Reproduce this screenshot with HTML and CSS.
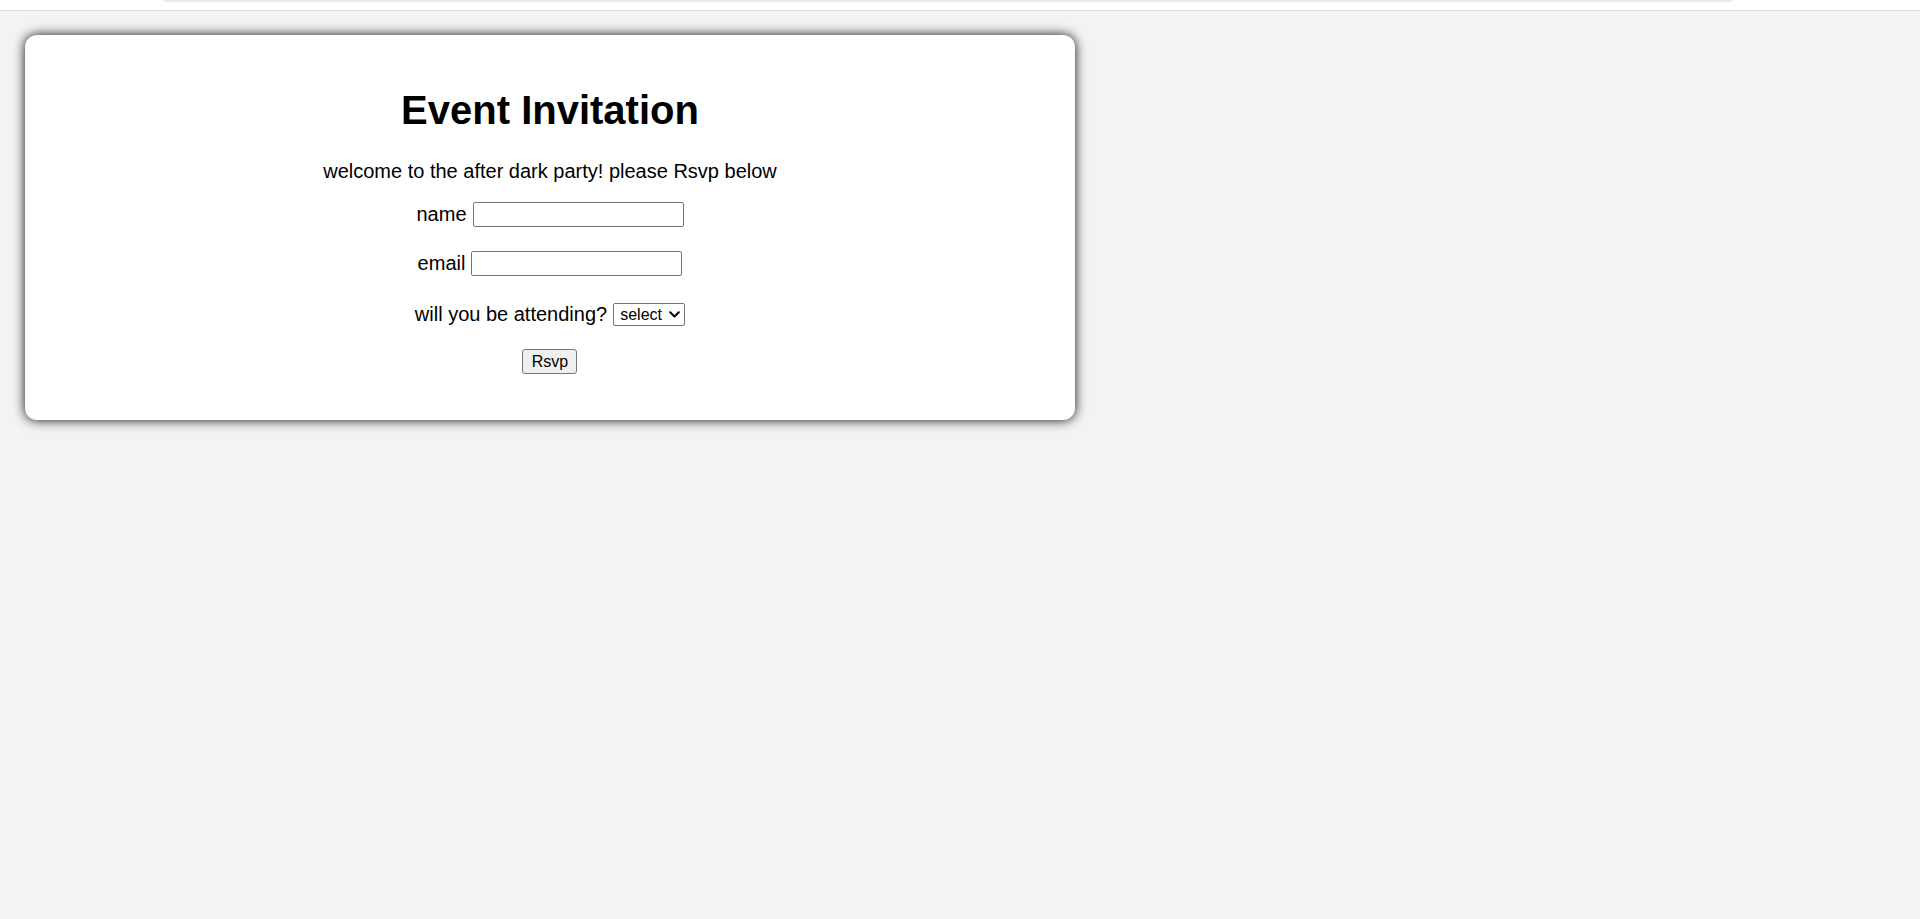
FILE: index.html
```html
<!DOCTYPE html>
<html lang="en">
<head>
<meta charset="utf-8">
<title>Event Invitation</title>
<link rel="stylesheet" href="styles.css">
</head>
<body>
<div class="topstrip"><div class="topbar"></div></div>
<main class="page">
  <section class="card">
    <h1 class="title">Event Invitation</h1>
    <p class="intro">welcome to the after dark party! please Rsvp below</p>
    <form class="form">
      <div class="row">
        <label class="label" for="name">name</label>
        <input class="field" type="text" id="name">
      </div>
      <div class="row">
        <label class="label" for="email">email</label>
        <input class="field" type="email" id="email">
      </div>
      <div class="row row-select">
        <label class="label" for="attend">will you be attending?</label>
        <span class="select-wrap">
          <select class="choice" id="attend">
            <option>select</option>
            <option>yes</option>
            <option>no</option>
          </select>
          <svg class="chevron" width="11" height="7" viewBox="0 0 11 7" aria-hidden="true">
            <path d="M1.2 1.2 L5.5 5.5 L9.8 1.2" fill="none" stroke="#000" stroke-width="2" stroke-linecap="round" stroke-linejoin="round"/>
          </svg>
        </span>
      </div>
      <div class="row row-btn">
        <button class="btn" type="button">Rsvp</button>
      </div>
    </form>
  </section>
</main>
</body>
</html>
```

FILE: styles.css
```css
html, body {
  margin: 0;
  padding: 0;
}

body {
  background: #f3f3f3;
  font-family: "Liberation Sans", Arial, sans-serif;
  color: #000;
  height: 919px;
  overflow: hidden;
}

.topstrip {
  height: 10px;
  background: #fff;
  border-bottom: 1px solid #dcdcdc;
}

.topbar {
  margin-left: 163px;
  width: 1570px;
  height: 2px;
  background: #e6e9f6;
  border-radius: 0 0 2px 2px;
}

.page {
  padding: 24px 0 0 25px;
}

.card {
  width: 1050px;
  height: 385px;
  box-sizing: border-box;
  background: #fff;
  border-radius: 12px;
  box-shadow: 0 0 12px rgba(0, 0, 0, 0.95);
  padding-top: 52px;
  display: flex;
  flex-direction: column;
  align-items: center;
}

.title {
  margin: 0;
  font-size: 40px;
  font-weight: bold;
  line-height: 46px;
}

.intro {
  margin: 27px 0 0;
  font-size: 20px;
  line-height: 23px;
}

.form {
  margin-top: 19px;
  display: flex;
  flex-direction: column;
  align-items: center;
  gap: 24px;
}

.row {
  display: flex;
  align-items: center;
  justify-content: center;
  gap: 6px;
  height: 25px;
}

.row-select {
  margin-top: 2px;
}

.row-btn {
  margin-top: -2px;
}

.label {
  font-size: 20px;
  line-height: 23px;
}

.field {
  width: 211px;
  height: 25px;
  box-sizing: border-box;
  margin: 0;
  border: 1px solid #767676;
  border-radius: 2px;
  padding: 1px 2px;
  font-size: 16px;
  font-family: "Liberation Sans", Arial, sans-serif;
  background: #fff;
}

.select-wrap {
  position: relative;
  display: inline-flex;
}

.choice {
  -webkit-appearance: none;
  appearance: none;
  width: 72px;
  height: 23px;
  box-sizing: border-box;
  margin: 0;
  padding: 0 0 0 6px;
  font-size: 16px;
  line-height: 21px;
  font-family: "Liberation Sans", Arial, sans-serif;
  border: 1px solid #767676;
  border-radius: 2px;
  background: #fff;
  color: #000;
}

.chevron {
  position: absolute;
  right: 5px;
  top: 8px;
  pointer-events: none;
}

.btn {
  width: 55px;
  height: 25px;
  box-sizing: border-box;
  margin: 0;
  padding: 0 6px;
  font-size: 16px;
  font-family: "Liberation Sans", Arial, sans-serif;
  background: #efefef;
  border: 1px solid #767676;
  border-radius: 3px;
  color: #000;
}
```
